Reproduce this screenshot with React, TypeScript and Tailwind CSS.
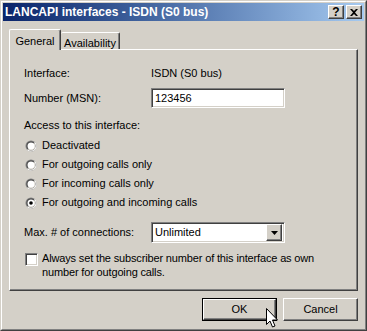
import { useState } from "react"

const raised = "border border-t-white border-l-white border-r-[#404040] border-b-[#404040] shadow-[inset_-1px_-1px_#808080]"
const sunken =
  "border border-t-[#808080] border-l-[#808080] border-r-white border-b-white shadow-[inset_1px_1px_#404040,inset_-1px_-1px_#d4d0c8]"

function Radio({ checked }: { checked?: boolean }) {
  return (
    <svg width="12" height="12" viewBox="0 0 12 12" className="shrink-0">
      <circle cx="6" cy="6" r="5.5" fill="#808080" />
      <path d="M11.5 6a5.5 5.5 0 0 1-9.4 3.9L9.9 2.1A5.5 5.5 0 0 1 11.5 6z" fill="#ffffff" />
      <circle cx="6" cy="6" r="4.5" fill="#404040" />
      <path d="M10.5 6a4.5 4.5 0 0 1-7.7 3.2L9.2 2.8A4.5 4.5 0 0 1 10.5 6z" fill="#d4d0c8" />
      <circle cx="6" cy="6" r="3.5" fill="#ffffff" />
      {checked && <circle cx="6" cy="6" r="1.8" fill="#000000" />}
    </svg>
  )
}

function RadioRow({ label, checked }: { label: string; checked?: boolean }) {
  return (
    <div className="flex h-[19px] items-center">
      <div className="ml-[1px]">
        <Radio checked={checked} />
      </div>
      <span className="ml-[5px]">{label}</span>
    </div>
  )
}

function DialogButton({ label, isDefault }: { label: string; isDefault?: boolean }) {
  return (
    <div className={isDefault ? "border border-black" : ""}>
      <div
        className={`flex items-center justify-center ${raised} ${isDefault ? "h-[21px] w-[73px]" : "h-[23px] w-[75px]"}`}
      >
        {label}
      </div>
    </div>
  )
}

function CaptionButton({ children }: { children: React.ReactNode }) {
  return (
    <div className={`flex h-[14px] w-[16px] items-center justify-center bg-[#d4d0c8] ${raised}`}>{children}</div>
  )
}

export default function App() {
  const [msn] = useState("123456")

  return (
    <div
      className="relative h-[331px] w-[367px] overflow-hidden bg-[#d4d0c8] text-[11px] text-black"
      style={{ fontFamily: '"Liberation Sans", Arial, sans-serif' }}
    >
      <div className="flex h-full flex-col border border-t-[#d4d0c8] border-l-[#d4d0c8] border-r-[#404040] border-b-[#404040]">
        <div className="flex h-full flex-col border border-t-white border-l-white border-r-[#808080] border-b-[#808080] p-[1px]">
          {/* title bar */}
          <div className="flex h-[18px] items-center justify-between bg-gradient-to-r from-[#0a246a] to-[#a6caf0] pl-[2px] pr-[2px]">
            <span className="text-[12px] font-bold text-white">LANCAPI interfaces - ISDN (S0 bus)</span>
            <div className="flex gap-[2px]">
              <CaptionButton>
                <span className="text-[12px] font-bold leading-none">?</span>
              </CaptionButton>
              <CaptionButton>
                <svg width="8" height="7" viewBox="0 0 8 7">
                  <path d="M0 0h2l2 2 2-2h2L5 3.5 8 7H6L4 5 2 7H0l3-3.5z" fill="#000" />
                </svg>
              </CaptionButton>
            </div>
          </div>

          {/* tabs */}
          <div className="mt-[8px] flex h-[20px] items-end pl-[6px]">
            <div className="relative z-10 mb-[-1px] flex h-[21px] w-[52px] items-start justify-center rounded-t-[2px] border-t border-l border-r border-t-white border-l-white border-r-[#404040] bg-[#d4d0c8] pt-[3px] shadow-[inset_-1px_0_#808080]">
              General
            </div>
            <div className="flex h-[17px] w-[59px] items-start justify-center rounded-t-[2px] border-t border-r border-t-white border-r-[#404040] pt-[2px] shadow-[inset_-1px_0_#808080]">
              Availability
            </div>
          </div>

          {/* tab panel */}
          <div className="ml-[6px] mr-[6px] h-[242px] border border-t-white border-l-white border-r-[#404040] border-b-[#404040] pl-[14px] shadow-[inset_-1px_-1px_#808080]">
            <div className="mt-[16px] flex h-[14px] items-center">
              <span className="w-[127px]">Interface:</span>
              <span>ISDN (S0 bus)</span>
            </div>

            <div className="mt-[8px] flex h-[20px] items-center">
              <span className="w-[127px]">Number (MSN):</span>
              <div className={`flex h-[20px] w-[134px] items-center bg-white pl-[3px] ${sunken}`}>{msn}</div>
            </div>

            <div className="mt-[10px] flex h-[14px] items-center">Access to this interface:</div>

            <div className="mt-[4px]">
              <RadioRow label="Deactivated" />
              <RadioRow label="For outgoing calls only" />
              <RadioRow label="For incoming calls only" />
              <RadioRow label="For outgoing and incoming calls" checked />
            </div>

            <div className="mt-[10px] flex h-[21px] items-center">
              <span className="w-[127px]">Max. # of connections:</span>
              <div className={`flex h-[21px] w-[134px] items-center bg-white pl-[3px] pr-[2px] ${sunken}`}>
                <span className="flex-1">Unlimited</span>
                <div className={`flex h-[17px] w-[16px] items-center justify-center bg-[#d4d0c8] ${raised}`}>
                  <svg width="7" height="4" viewBox="0 0 7 4">
                    <path d="M0 0h7L3.5 4z" fill="#000" />
                  </svg>
                </div>
              </div>
            </div>

            <div className="mt-[8px] flex items-start">
              <div className={`mt-[2px] ml-[1px] h-[13px] w-[13px] shrink-0 bg-white ${sunken}`} />
              <p className="ml-[4px] leading-[14px] tracking-[-0.15px]">
                Always set the subscriber number of this interface as own
                <br />
                number for outgoing calls.
              </p>
            </div>
          </div>

          {/* buttons */}
          <div className="mt-[7px] flex justify-end gap-[6px] pr-[6px]">
            <DialogButton label="OK" isDefault />
            <DialogButton label="Cancel" />
          </div>
        </div>
      </div>

      {/* mouse pointer */}
      <svg className="absolute left-[266px] top-[308px]" width="12" height="20" viewBox="0 0 12 20">
        <path
          d="M0.5 0.5v16l3.5-3.5 2.5 6 2.5-1-2.5-6h5z"
          fill="#ffffff"
          stroke="#000000"
          strokeWidth="1"
          strokeLinejoin="miter"
        />
      </svg>
    </div>
  )
}
